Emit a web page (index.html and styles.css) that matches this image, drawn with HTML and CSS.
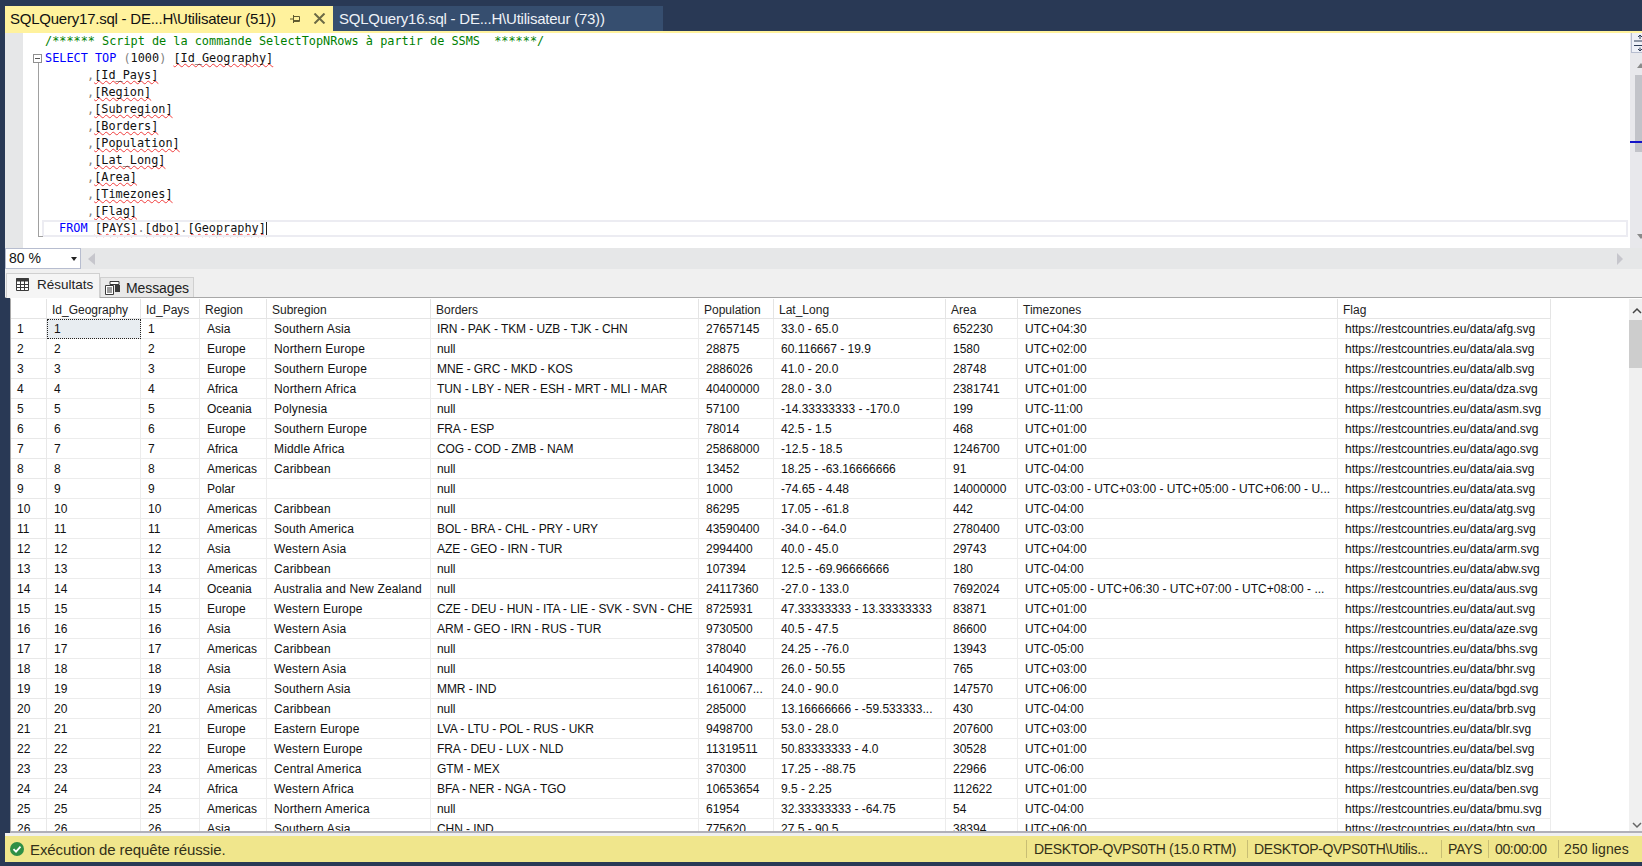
FILE: index.html
```html
<!DOCTYPE html>
<html lang="fr">
<head>
<meta charset="utf-8">
<title>SQLQuery17.sql</title>
<link rel="stylesheet" href="styles.css">
</head>
<body>
<div class="app">
  <div class="tabbar">
    <div class="tab active"><span class="tab-label">SQLQuery17.sql - DE...H\Utilisateur (51))</span>
      <svg class="tab-pin" width="11" height="10" viewBox="0 0 11 10"><path d="M0 5h3M3.500 1v8M3.500 2.500h6v5h-6M3.500 6.500h6" fill="none" stroke="#5f5b30" stroke-width="1"/></svg>
      <svg class="tab-close" width="13" height="11" viewBox="0 0 13 11"><path d="M1.500 .5l10 10M11.500 .5l-10 10" stroke="#6b6a45" stroke-width="2"/></svg>
    </div>
    <div class="tab inactive"><span class="tab-label">SQLQuery16.sql - DE...H\Utilisateur (73))</span></div>
  </div>
  <div class="tabline"></div>
  <div class="editor-wrap">
    <div class="margin"></div>
    <div class="code">
      <div class="ln"><span class="c-com">/****** Script de la commande SelectTopNRows à partir de SSMS  ******/</span></div>
      <div class="ln first"><span class="fold"></span><span class="c-kw">SELECT TOP</span> <span class="c-op">(</span>1000<span class="c-op">)</span> <span class="sq">[Id_Geography]</span></div>
      <div class="ln sub"><span class="c-op">,</span><span class="sq">[Id_Pays]</span></div>
      <div class="ln sub"><span class="c-op">,</span><span class="sq">[Region]</span></div>
      <div class="ln sub"><span class="c-op">,</span><span class="sq">[Subregion]</span></div>
      <div class="ln sub"><span class="c-op">,</span><span class="sq">[Borders]</span></div>
      <div class="ln sub"><span class="c-op">,</span><span class="sq">[Population]</span></div>
      <div class="ln sub"><span class="c-op">,</span><span class="sq">[Lat_Long]</span></div>
      <div class="ln sub"><span class="c-op">,</span><span class="sq">[Area]</span></div>
      <div class="ln sub"><span class="c-op">,</span><span class="sq">[Timezones]</span></div>
      <div class="ln sub"><span class="c-op">,</span><span class="sq">[Flag]</span></div>
      <div class="ln cur"><span class="c-kw">FROM</span> <span class="sq">[PAYS]</span><span class="c-op">.</span><span class="sq">[dbo]</span><span class="c-op">.</span><span class="sq">[Geopraphy]</span><span class="caret"></span></div>
    </div>
    <div class="vscroll">
      <div class="split"><svg width="11" height="16" viewBox="0 0 11 16"><path d="M0 6h11M0 10.500h11" stroke="#2b3a55" fill="none"/><path d="M6 0v4M6 12.500v3.500M4 2l2-2 2 2M4 14l2 2 2-2" stroke="#2b3a55" fill="none"/></svg></div>
      <div class="arrow-up"></div>
      <div class="thumb"><div class="mark"></div></div>
      <div class="arrow-down"></div>
    </div>
  </div>
  <div class="zoombar">
    <div class="zoombox"><span>80 %</span><span class="caret-down"></span></div>
    <div class="arrow-left"></div>
    <div class="arrow-right"></div>
  </div>
  <div class="rtabs">
    <div class="rtab on">
      <svg width="13" height="13" viewBox="0 0 13 13"><path d="M.5.500h12v12H.5z" fill="#fff" stroke="#3a3a3a"/><path d="M0 .5h13v3H0z" fill="#3a3a3a"/><path d="M.5 6.500h12M.5 9.500h12M4.500 .5v12M8.500 .5v12" fill="none" stroke="#3a3a3a"/></svg>
      <span>Résultats</span></div>
    <div class="rtab msgs">
      <svg width="15" height="14" viewBox="0 0 15 14"><path d="M.5 4.500h8v9h-8z" fill="#fff" stroke="#3a3a3a"/><path d="M2 7h5M2 9h5M2 11h5" fill="none" stroke="#3a3a3a"/><path d="M5 .5h9v3H5z" fill="#fff" stroke="#3a3a3a"/><path d="M10 4h5v7h-5z" fill="#3a3a3a"/></svg>
      <span>Messages</span></div>
  </div>
  <div class="grid-wrap">
    <div class="grid-scroll">
      <div id="grid" class="grid"></div>
    </div>
    <div class="gscroll">
      <svg class="chev" width="10" height="7" viewBox="0 0 10 7"><path d="M1 6l4-4 4 4" fill="none" stroke="#444" stroke-width="1.500"/></svg>
      <div class="gthumb"></div>
      <svg class="chev down" width="10" height="7" viewBox="0 0 10 7"><path d="M1 1l4 4 4-4" fill="none" stroke="#666" stroke-width="1.500"/></svg>
    </div>
  </div>
  <div class="status">
    <svg class="ok" width="14" height="14" viewBox="0 0 14 14"><circle cx="7" cy="7" r="7" fill="#2f8f46"/><path d="M3.500 7.200l2.500 2.500 4.500-5" fill="none" stroke="#fff" stroke-width="1.800"/></svg>
    <span class="msg">Exécution de requête réussie.</span>
    <span class="st st1">DESKTOP-QVPS0TH (15.0 RTM)</span>
    <span class="st st2">DESKTOP-QVPS0TH\Utilis...</span>
    <span class="st st3">PAYS</span>
    <span class="st st4">00:00:00</span>
    <span class="st st5">250 lignes</span>
  </div>
</div>
<script src="grid.js"></script>
</body>
</html>
```
FILE: grid.js
```js
var cols=["","Id_Geography","Id_Pays","Region","Subregion","Borders","Population","Lat_Long","Area","Timezones","Flag"];
var rows=[
["Asia","Southern Asia","IRN - PAK - TKM - UZB - TJK - CHN","27657145","33.0 - 65.0","652230","UTC+04:30","afg"],
["Europe","Northern Europe","null","28875","60.116667 - 19.9","1580","UTC+02:00","ala"],
["Europe","Southern Europe","MNE - GRC - MKD - KOS","2886026","41.0 - 20.0","28748","UTC+01:00","alb"],
["Africa","Northern Africa","TUN - LBY - NER - ESH - MRT - MLI - MAR","40400000","28.0 - 3.0","2381741","UTC+01:00","dza"],
["Oceania","Polynesia","null","57100","-14.33333333 - -170.0","199","UTC-11:00","asm"],
["Europe","Southern Europe","FRA - ESP","78014","42.5 - 1.5","468","UTC+01:00","and"],
["Africa","Middle Africa","COG - COD - ZMB - NAM","25868000","-12.5 - 18.5","1246700","UTC+01:00","ago"],
["Americas","Caribbean","null","13452","18.25 - -63.16666666","91","UTC-04:00","aia"],
["Polar","","null","1000","-74.65 - 4.48","14000000","UTC-03:00 - UTC+03:00 - UTC+05:00 - UTC+06:00 - U...","ata"],
["Americas","Caribbean","null","86295","17.05 - -61.8","442","UTC-04:00","atg"],
["Americas","South America","BOL - BRA - CHL - PRY - URY","43590400","-34.0 - -64.0","2780400","UTC-03:00","arg"],
["Asia","Western Asia","AZE - GEO - IRN - TUR","2994400","40.0 - 45.0","29743","UTC+04:00","arm"],
["Americas","Caribbean","null","107394","12.5 - -69.96666666","180","UTC-04:00","abw"],
["Oceania","Australia and New Zealand","null","24117360","-27.0 - 133.0","7692024","UTC+05:00 - UTC+06:30 - UTC+07:00 - UTC+08:00 - ...","aus"],
["Europe","Western Europe","CZE - DEU - HUN - ITA - LIE - SVK - SVN - CHE","8725931","47.33333333 - 13.33333333","83871","UTC+01:00","aut"],
["Asia","Western Asia","ARM - GEO - IRN - RUS - TUR","9730500","40.5 - 47.5","86600","UTC+04:00","aze"],
["Americas","Caribbean","null","378040","24.25 - -76.0","13943","UTC-05:00","bhs"],
["Asia","Western Asia","null","1404900","26.0 - 50.55","765","UTC+03:00","bhr"],
["Asia","Southern Asia","MMR - IND","1610067...","24.0 - 90.0","147570","UTC+06:00","bgd"],
["Americas","Caribbean","null","285000","13.16666666 - -59.533333...","430","UTC-04:00","brb"],
["Europe","Eastern Europe","LVA - LTU - POL - RUS - UKR","9498700","53.0 - 28.0","207600","UTC+03:00","blr"],
["Europe","Western Europe","FRA - DEU - LUX - NLD","11319511","50.83333333 - 4.0","30528","UTC+01:00","bel"],
["Americas","Central America","GTM - MEX","370300","17.25 - -88.75","22966","UTC-06:00","blz"],
["Africa","Western Africa","BFA - NER - NGA - TGO","10653654","9.5 - 2.25","112622","UTC+01:00","ben"],
["Americas","Northern America","null","61954","32.33333333 - -64.75","54","UTC-04:00","bmu"],
["Asia","Southern Asia","CHN - IND","775620","27.5 - 90.5","38394","UTC+06:00","btn"]
];
var grid=document.getElementById("grid");
function cell(text,cls){var d=document.createElement("div");d.className=cls;d.textContent=text;grid.appendChild(d);}
cols.forEach(function(c){cell(c,"hd");});
rows.forEach(function(r,i){
  var n=String(i+1);
  var vals=[n,n].concat(r.slice(0,7),["https://restcountries.eu/data/"+r[7]+".svg"]);
  cell(n,"rn");
  vals.forEach(function(v,j){
    var cls="td";
    if(i===0&&j===0)cls+=" sel";
    if(j===3)cls+=" c-subregion";
    if(j===4)cls+=" c-borders";
    cell(v,cls);
  });
});
```
FILE: styles.css
```css
* { box-sizing: border-box; }
html, body { margin: 0; padding: 0; height: 100%; overflow: hidden; }
body { width: 1642px; height: 866px; background: #293955; font-family: "Liberation Sans", Arial, sans-serif; color: #111; }
.app { width: 1642px; height: 866px; display: flex; flex-direction: column; padding: 6px 0 4px 5px; overflow: hidden; }

.tabbar { display: flex; height: 25px; flex: none; }
.tab { display: flex; align-items: center; padding-left: 5px; font-size: 15px; letter-spacing: -0.23px; }
.tab.active { width: 328px; background: #fff29d; color: #111; }
.tab.inactive { background: #364e6f; color: #eef2f8; width: 330px; padding-left: 6px; }
.tab-label { white-space: nowrap; flex: none; width: 280px; }
.tab.inactive .tab-label { width: auto; }
.tab-pin { flex: none; }
.tab-close { margin-left: 12px; flex: none; }
.tabline { height: 2px; background: #fff29d; flex: none; }

.editor-wrap { height: 215px; flex: none; display: flex; background: #fff; position: relative; }
.margin { width: 18px; background: #e6e7e8; flex: none; }
.code { flex: 1; font-family: "DejaVu Sans Mono", "Liberation Mono", monospace; font-size: 11.85px; color: #111; position: relative; }
.ln { height: 17px; line-height: 17px; padding-left: 22px; white-space: pre; position: relative; }
.ln.sub { padding-left: 64px; }
.ln.sub::before { content: ""; position: absolute; left: 15px; top: 0; bottom: 0; border-left: 1px solid #a0a0a0; }
.ln.cur { margin-left: 19px; padding-left: 17px; width: calc(100% - 21px); outline: 2px solid #ececf2; outline-offset: -2px; }
.ln.cur::before { content: ""; position: absolute; left: -4px; top: 0; bottom: 0; width: 4px; border-left: 1px solid #a0a0a0; border-bottom: 1px solid #a0a0a0; }
.ln.first::after { content: ""; position: absolute; left: 15px; top: 13px; bottom: 0; border-left: 1px solid #a0a0a0; }
.fold { position: absolute; left: 10px; top: 4px; width: 9px; height: 9px; border: 1px solid #909090; background: linear-gradient(#555,#555) center/5px 1px no-repeat #fff; }
.c-com { color: #008000; }
.c-kw { color: #0000ff; }
.c-op { color: #808080; }
.sq { text-decoration: underline wavy #f03c3c 1px; text-underline-offset: 1px; text-decoration-skip-ink: none; }
.caret { display: inline-block; width: 1px; height: 15px; background: #222; vertical-align: -3px; }

.vscroll { width: 12px; background: #e8e8ec; flex: none; display: flex; flex-direction: column; position: relative; overflow: hidden; }
.split { width: 11px; height: 20px; margin-left: 1px; background: #eef0f7; border-left: 1px solid #b7bdcf; border-bottom: 1px solid #b7bdcf; overflow: hidden; padding-top: 2px; flex: none; }
.split svg { display: block; margin-left: 2px; }
.arrow-up { width: 0; height: 0; margin-top: 10px; margin-left: 7px; flex: none; border-left: 4px solid transparent; border-right: 4px solid transparent; border-bottom: 5px solid #8a8a8a; }
.thumb { width: 7px; height: 77px; background: #c2c3c9; margin-top: 7px; margin-left: 5px; position: relative; flex: none; }
.mark { position: absolute; left: -5px; right: 0; top: 66px; height: 2px; background: #1414c8; }
.arrow-down { width: 0; height: 0; margin-top: auto; margin-bottom: 9px; margin-left: 7px; flex: none; border-left: 4px solid transparent; border-right: 4px solid transparent; border-top: 5px solid #8a8a8a; }

.zoombar { height: 21px; flex: none; background: #e6e7e8; display: flex; align-items: center; padding-right: 19px; }
.zoombox { width: 76px; height: 21px; background: #fff; border: 1px solid #b7bdcf; display: flex; align-items: center; justify-content: space-between; padding: 0 3px 0 3px; font-size: 14px; line-height: 17px; }
.caret-down { width: 0; height: 0; border-left: 3.500px solid transparent; border-right: 3.500px solid transparent; border-top: 4px solid #222; }
.arrow-left { margin-left: 7px; width: 0; height: 0; border-top: 6px solid transparent; border-bottom: 6px solid transparent; border-right: 7px solid #c6c6cc; }
.arrow-right { margin-left: auto; width: 0; height: 0; border-top: 6px solid transparent; border-bottom: 6px solid transparent; border-left: 6px solid #c6c6cc; }

.rtabs { height: 29px; flex: none; background: #f0f0f0; display: flex; align-items: flex-end; padding-left: 1px; border-bottom: 1px solid #a8a8a8; }
.rtab { display: flex; align-items: center; height: 20px; font-size: 14px; background: #e9e9e9; border: 1px solid #d0d0d0; border-bottom: 0; color: #222; }
.rtab.on { height: 25px; width: 94px; padding: 0 0 3px 9px; gap: 8px; background: #f5f5f5; margin-bottom: -1px; font-size: 13.500px; }
.rtab.msgs { width: 94px; padding-left: 4px; gap: 6px; letter-spacing: -0.1px; }

.grid-wrap { height: 535px; flex: none; background: #fff; margin-left: 5px; display: flex; border-left: 1px solid #a8a8a8; border-bottom: 2px solid #b0b0b8; border-top: 1px solid #fff; }
.grid-scroll { flex: 1; overflow: hidden; }
.grid { display: grid; grid-template-columns: 36px 94px 59px 67px 164px 268px 75px 172px 72px 320px 213px; grid-auto-rows: 20px; font-size: 12px; width: max-content; }
.hd { height: 20px; line-height: 19px; padding: 2px 0 0 5px; white-space: nowrap; border-right: 1px solid #e4e4e4; border-bottom: 1px solid #e4e4e4; color: #222; }
.rn { line-height: 20px; padding-left: 6px; white-space: nowrap; border-right: 1px solid #e8e8e8; border-bottom: 1px solid #e8e8e8; }
.td { line-height: 18px; padding: 1px 0 0 7px; white-space: nowrap; overflow: hidden; border-right: 1px solid #ececec; border-bottom: 1px solid #ececec; color: #111; }
.c-subregion { letter-spacing: 0.15px; }
.td.c-borders { letter-spacing: -0.08px; padding-left: 6px; }
.td.sel { background: #e8edf1; outline: 1px dotted #222; outline-offset: -1px; }
.gscroll { width: 13px; flex: none; background: #f0f0f0; display: flex; flex-direction: column; position: relative; overflow: hidden; }
.chev { flex: none; margin: 8px 0 0 3px; }
.chev.down { margin-top: auto; margin-bottom: 2px; }
.gthumb { width: 100%; height: 48px; background: #cdcdcd; margin-top: 6px; flex: none; }

.status { height: 29px; flex: none; background: #f0e68c; border-top: 3px solid #f0f0f0; display: flex; align-items: center; font-size: 15px; color: #333018; }
.ok { margin-left: 5px; flex: none; }
.msg { margin-left: 6px; margin-right: auto; letter-spacing: -0.1px; }
.st { height: 18px; line-height: 18px; border-left: 1px solid #c8be74; white-space: nowrap; padding-left: 6px; font-size: 14px; letter-spacing: -0.35px; flex: none; }
.st1 { width: 221px; padding-left: 7px; }
.st2 { width: 194px; }
.st3 { width: 47px; }
.st4 { width: 70px; }
.st5 { width: 84px; padding-left: 5px; letter-spacing: 0.1px; }
```
